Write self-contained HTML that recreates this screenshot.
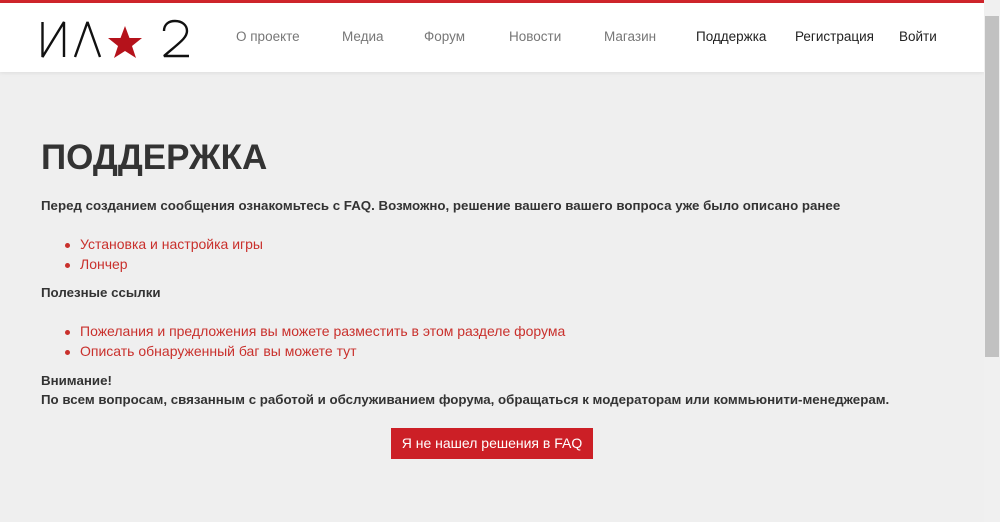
<!DOCTYPE html>
<html><head><meta charset="utf-8"><style>
html,body{margin:0;padding:0;width:1000px;height:522px;overflow:hidden;background:#efefef;font-family:"Liberation Sans","DejaVu Sans",sans-serif;}
.top{position:absolute;left:0;top:0;width:984px;height:3px;background:#d0252b}
.hdr{position:absolute;left:0;top:3px;width:984px;height:69px;background:#fff;box-shadow:0 1px 4px rgba(0,0,0,.08)}
.logo{position:absolute;left:40px;top:15px}
.nav{position:absolute;top:26px;font-size:13.5px;color:#777}
.nav.b{color:#222}
h1{position:absolute;left:41px;top:138px;margin:0;font-size:35px;font-weight:bold;color:#333;letter-spacing:0}
.p{position:absolute;left:41px;font-size:13.3px;font-weight:bold;color:#333}
.li{position:absolute;left:80px;font-size:14px;color:#c9302c}
.li:before{content:"";position:absolute;left:-15px;top:7px;width:5px;height:5px;border-radius:50%;background:#c9302c}
.btn{position:absolute;left:391px;top:428px;width:202px;height:31px;background:#cc1f26;color:#fff;font-size:14px;text-align:center;line-height:31px}
.sb{position:absolute;left:984px;top:0;width:16px;height:522px;background:#f0f0f0}
.th{position:absolute;left:985px;top:16px;width:14px;height:341px;background:#c1c1c1}
</style></head><body>
<div class="top"></div>
<div class="hdr">
<svg class="logo" width="152" height="44" viewBox="0 0 152 44">
<g fill="none" stroke="#111" stroke-width="2.4" stroke-linejoin="bevel">
<path d="M2.5 4V39L24 4V39"/>
<path d="M35 39L47.5 4L60 39"/>
<path d="M124 13C124 6 129 3 135 3C142 3 147 7 147 13C147 20 139 25 124 38H149"/>
</g>
<polygon fill="#b5121b" points="85,8 89.5,20 102,20 92,28 96,40 85,33 74,40 78,28 68,20 80.5,20"/>
</svg>
<span class="nav" style="left:236px">О проекте</span>
<span class="nav" style="left:342px">Медиа</span>
<span class="nav" style="left:424px">Форум</span>
<span class="nav" style="left:509px">Новости</span>
<span class="nav" style="left:604px">Магазин</span>
<span class="nav b" style="left:696px">Поддержка</span>
<span class="nav b" style="left:795px">Регистрация</span>
<span class="nav b" style="left:899px">Войти</span>
</div>
<h1>ПОДДЕРЖКА</h1>
<div class="p" style="top:198px">Перед созданием сообщения ознакомьтесь с FAQ. Возможно, решение вашего вашего вопроса уже было описано ранее</div>
<div class="li" style="top:236px">Установка и настройка игры</div>
<div class="li" style="top:256px">Лончер</div>
<div class="p" style="top:285px">Полезные ссылки</div>
<div class="li" style="top:323px">Пожелания и предложения вы можете разместить в этом разделе форума</div>
<div class="li" style="top:343px">Описать обнаруженный баг вы можете тут</div>
<div class="p" style="top:373px">Внимание!</div>
<div class="p" style="top:392px">По всем вопросам, связанным с работой и обслуживанием форума, обращаться к модераторам или коммьюнити-менеджерам.</div>
<div class="btn">Я не нашел решения в FAQ</div>
<div class="sb"></div><div class="th"></div>
</body></html>
